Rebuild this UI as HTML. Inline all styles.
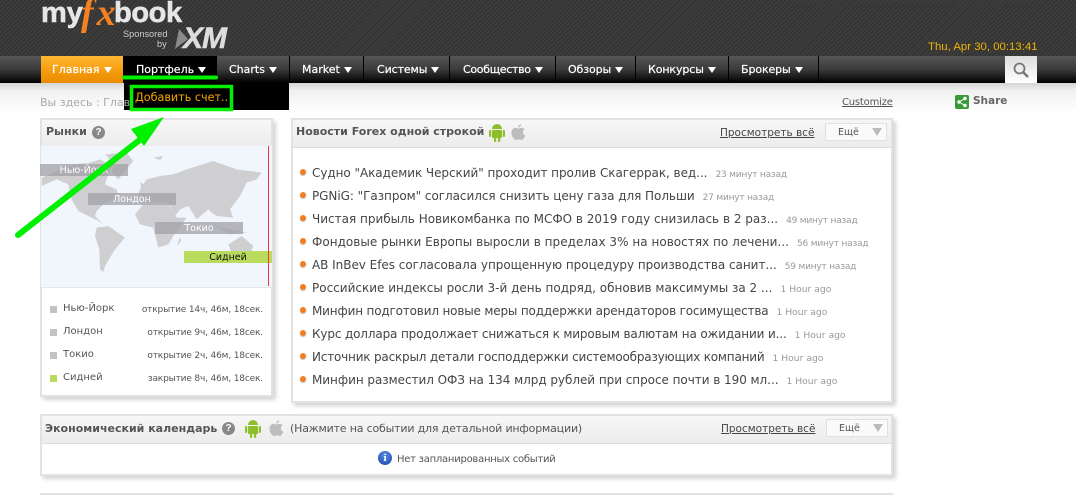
<!DOCTYPE html>
<html><head><meta charset="utf-8"><style>
html,body{margin:0;padding:0;background:#fff;width:1076px;height:495px;overflow:hidden}
body{position:relative;font-family:"DejaVu Sans","Liberation Sans",sans-serif;font-size:12px;color:#4a4a4a}
.a{position:absolute;white-space:nowrap}
.hd{position:absolute;left:0;top:0;width:1076px;height:56px;background:repeating-linear-gradient(135deg,#2f2f2f 0 1px,#3d3d3d 1px 3px)}
.nav{position:absolute;left:0;top:56px;width:1076px;height:27px;background:linear-gradient(#555,#3a3a3a 50%,#000)}
.sep{position:absolute;top:56px;width:1px;height:27px;background:#000}
.ni{position:absolute;top:62px;font:11px/16px "DejaVu Sans",sans-serif;color:#fff;white-space:nowrap;-webkit-text-stroke:.2px #fff}
.tri{display:inline-block;width:0;height:0;border-left:4px solid transparent;border-right:4px solid transparent;border-top:6px solid #fff;margin-left:4px}
.panel{position:absolute;background:#fff;border:2px solid #e2e2e2;box-sizing:border-box;box-shadow:3px 3px 4px #d4d4d4}
.ph{position:absolute;left:0;top:0;right:0;height:27px;background:linear-gradient(#f7f7f7,#ececec);border-bottom:1px solid #dedede}
.n{position:absolute;left:312px;font-size:12px;color:#454545;white-space:nowrap;line-height:16px}
.n small{font-size:9px;color:#999;margin-left:8px;letter-spacing:-.2px}
.n small.h{font-size:9.2px;letter-spacing:0}
.dot{position:absolute;left:300px;width:6px;height:6px;border-radius:50%;background:#f57d20;box-shadow:0 1px 1px #bbb}
.bar{position:absolute;height:12px;width:88px;color:#fff;font-size:9.5px;line-height:14px;text-align:center;background:rgba(160,160,165,.75)}
.sq{position:absolute;left:50px;width:7px;height:7px;background:#c3c3c3}
.mk{position:absolute;left:63px;font-size:10px;color:#555;line-height:14px}
.tm{position:absolute;right:813px;font-size:9px;color:#555;line-height:14px;white-space:nowrap;letter-spacing:-.16px}
.t{font-weight:bold;color:#555;font-size:11px;white-space:nowrap}
.lnk{position:absolute;font-size:10.5px;color:#444;text-decoration:underline;white-space:nowrap}
.btn{position:absolute;width:60px;height:16px;background:#fafafa;border:1px solid #e0e0e0;font-size:9.5px;line-height:17px;color:#555;text-indent:12px}
.btn i{position:absolute;right:4px;top:4px;width:0;height:0;border-left:5px solid transparent;border-right:5px solid transparent;border-top:8px solid #bbb}
</style></head><body>
<div class="hd"></div>
<div class="a" style="left:788px;top:0;width:250px;height:3px;background:#3a3a3a"></div>

<div class="a" style="left:41px;top:-3px;font:bold 29px 'Liberation Sans',sans-serif;color:#e6e6e6;-webkit-text-stroke:.6px #e6e6e6">my</div>
<div class="a" style="left:81px;top:-9px;font:italic bold 38px 'Liberation Serif',serif;color:#f58220;letter-spacing:3px">fx</div>
<div class="a" style="left:114px;top:-3px;font:bold 29px 'Liberation Sans',sans-serif;color:#e6e6e6;-webkit-text-stroke:.6px #e6e6e6;letter-spacing:-.4px">book</div>
<div class="a" style="left:123px;top:29px;font:9.2px/10px 'Liberation Sans',sans-serif;color:#ccc">Sponsored</div>
<div class="a" style="left:157px;top:39px;font:9.2px/10px 'Liberation Sans',sans-serif;color:#ccc">by</div>
<svg class="a" style="left:174px;top:27px" width="56" height="24"><polygon points="1,22 5,2 14,12" fill="#8a8a8a"/></svg>
<div class="a" style="left:183px;top:22px;font:italic bold 30px 'Liberation Sans',sans-serif;color:#ddd;letter-spacing:-1px;-webkit-text-stroke:.6px #ddd">XM</div>

<div class="a" style="left:928px;top:40px;line-height:14px;color:#f0b400;font-family:'Liberation Sans',sans-serif;font-size:11.4px">Thu, Apr 30, 00:13:41</div>

<div class="nav"></div>
<div class="a" style="left:0;top:83px;width:1076px;height:30px;background:linear-gradient(#d4d4d4,#f0f0f0 25%,#fff)"></div>
<div class="a" style="left:41px;top:56px;width:82px;height:27px;background:linear-gradient(#ffb733,#f59a0c 60%,#e98b00)"></div>
<div class="a" style="left:123px;top:56px;width:94px;height:27px;background:#000"></div>
<div class="a" style="left:124px;top:82px;width:165px;height:28px;background:#000"></div>
<div class="sep" style="left:289px"></div><div class="sep" style="left:363px"></div><div class="sep" style="left:449px"></div><div class="sep" style="left:555px"></div><div class="sep" style="left:635px"></div><div class="sep" style="left:728px"></div><div class="sep" style="left:818px"></div>
<div class="ni" style="left:52px">Главная<span class="tri"></span></div>
<div class="ni" style="left:136px">Портфель<span class="tri"></span></div>
<div class="ni" style="left:229px">Charts<span class="tri"></span></div>
<div class="ni" style="left:302px">Market<span class="tri"></span></div>
<div class="ni" style="left:377px;letter-spacing:-.1px">Системы<span class="tri"></span></div>
<div class="ni" style="left:463px;letter-spacing:-.3px">Сообщество<span class="tri"></span></div>
<div class="ni" style="left:568px;letter-spacing:-.1px">Обзоры<span class="tri"></span></div>
<div class="ni" style="left:648px;letter-spacing:-.1px">Конкурсы<span class="tri"></span></div>
<div class="ni" style="left:741px;letter-spacing:-.1px">Брокеры<span class="tri"></span></div>
<div class="a" style="left:1005px;top:56px;width:32px;height:27px;background:linear-gradient(#ddd,#fff)"></div>
<svg class="a" style="left:1013px;top:62px" width="18" height="18" fill="none" stroke="#777"><circle cx="6.500" cy="6.500" r="5" stroke-width="1.800"/><path d="M10 10L15 15" stroke-width="2.500"/></svg>

<div class="a" style="left:135px;top:90px;font-size:11.200px;line-height:16px;color:#f5a800">Добавить счет..</div>

<div class="a" style="left:40px;top:96px;font-size:11px;line-height:14px;color:#aaa">Вы здесь : Глав</div>
<div class="a" style="left:842px;top:96px;font-size:10px;line-height:14px;color:#555;text-decoration:underline;letter-spacing:-.2px">Customize</div>
<div class="a" style="left:955px;top:95px;width:14px;height:14px;background:#3a9a3a;border-radius:2px"></div>
<svg class="a" style="left:955px;top:95px" width="14" height="14" fill="#fff" stroke="#fff"><path d="M10 3.500L4 7l6 3.500" fill="none"/><circle cx="10" cy="3.500" r="1.200"/><circle cx="4" cy="7" r="1.200"/><circle cx="10" cy="10.500" r="1.200"/></svg>
<div class="a t" style="left:973px;top:94px;line-height:14px;color:#666;font-size:10.5px">Share</div>

<!-- markets -->
<div class="panel" style="left:40px;top:118px;width:233px;height:279px"><div class="ph" style="height:27px"></div></div>
<div class="a t" style="left:46px;top:125px;line-height:14px">Рынки</div>
<div class="a" style="left:92px;top:126px;width:13px;height:13px;border-radius:50%;background:#888;color:#fff;font:bold 10px/13px 'Liberation Sans',sans-serif;text-align:center">?</div>
<div class="a" style="left:41px;top:146px;width:231px;height:141px;background:#f1f6fd"></div>
<svg class="a" style="left:40px;top:146px" width="235" height="142" viewBox="0 0 705 426" fill="#cfcfd2">
<polygon points="5,95 40,80 100,55 150,50 180,40 215,60 205,85 195,115 230,130 235,150 210,165 190,175 170,195 165,210 190,235 175,225 145,210 115,195 95,160 85,115 50,100 5,120"/>
<polygon points="195,25 260,20 280,45 260,70 235,100 215,80 220,50"/>
<polygon points="170,245 205,240 255,275 225,310 195,360 190,378 180,370 178,310 165,270"/>
<polygon points="285,205 310,175 385,175 410,215 440,215 400,270 385,295 355,305 340,245 300,235"/>
<polygon points="300,130 320,100 360,90 400,85 440,70 520,45 590,70 665,80 650,100 620,110 600,150 570,190 580,215 530,210 515,200 505,190 470,220 445,180 420,190 405,210 385,170 320,170 295,145"/>
<polygon points="565,295 605,270 640,300 625,335 575,320"/>
<polygon points="585,130 597,155 575,170"/><polygon points="525,240 620,260 570,265"/><polygon points="300,110 315,115 305,135"/><polygon points="420,275 424,285 410,300"/><polygon points="340,35 370,30 360,42"/>
</svg>
<div class="bar" style="left:40px;top:164px">Нью-Йорк</div>
<div class="bar" style="left:88px;top:193px">Лондон</div>
<div class="bar" style="left:155px;top:222px">Токио</div>
<div class="bar" style="left:184px;top:251px;background:#b9dc5e;color:#111">Сидней</div>
<div class="a" style="left:268px;top:146px;width:1px;height:140px;background:#f33"></div>
<div class="a" style="left:41px;top:287px;width:231px;height:1px;background:#e6e6e6"></div>
<div class="sq" style="top:306px"></div><div class="mk" style="top:302px">Нью-Йорк</div><div class="tm" style="top:303px">открытие 14ч, 46м, 18сек.</div>
<div class="sq" style="top:329px"></div><div class="mk" style="top:325px">Лондон</div><div class="tm" style="top:326px">открытие 9ч, 46м, 18сек.</div>
<div class="sq" style="top:352px"></div><div class="mk" style="top:348px">Токио</div><div class="tm" style="top:349px">открытие 2ч, 46м, 18сек.</div>
<div class="sq" style="top:375px;background:#b9dc5e"></div><div class="mk" style="top:371px">Сидней</div><div class="tm" style="top:372px">закрытие 8ч, 46м, 18сек.</div>

<!-- news -->
<div class="panel" style="left:291px;top:118px;width:602px;height:285px"><div class="ph"></div></div>
<div class="a t" style="left:296px;top:125px;line-height:14px">Новости Forex одной строкой</div>
<svg class="a" style="left:488px;top:123px" width="18" height="19" fill="#8cbf2a"><path d="M4 6a5 5 0 0 1 10 0z"/><rect x="4" y="7" width="10" height="8" rx="1"/><rect x="1" y="7" width="2.200" height="7" rx="1.100"/><rect x="14.800" y="7" width="2.200" height="7" rx="1.100"/><rect x="6" y="14" width="2.200" height="5" rx="1"/><rect x="10" y="14" width="2.200" height="5" rx="1"/></svg>
<svg class="a" style="left:511px;top:124px" width="15" height="17" fill="#bdbdbd"><path d="M10 0c0 2-1.500 3.500-3 3.500C7 2 8.500.5 10 0zM7.500 4.500c1 0 1.800-.7 3-.7 1.200 0 2.300.7 3 1.700-2.500 1.500-2 5 .8 6-.7 2-2.200 4.500-3.600 4.500-1 0-1.500-.6-2.800-.6-1.300 0-1.800.6-2.800.6C3 16 .5 12 .5 8.800.5 5.700 2.500 3.800 4.500 3.800c1.200 0 2.200.7 3 .7z"/></svg>
<div class="lnk" style="left:720px;top:126px;line-height:14px">Просмотреть всё</div>
<div class="btn" style="left:825px;top:123px">Ещё<i></i></div>

<div class="dot" style="top:169px"></div><div class="n" style="top:165px"><span style="letter-spacing:-.05px">Судно "Академик Черский" проходит пролив Скагеррак, вед...</span><small>23 минут назад</small></div>
<div class="dot" style="top:192px"></div><div class="n" style="top:188px"><span style="letter-spacing:-.05px">PGNiG: "Газпром" согласился снизить цену газа для Польши</span><small>27 минут назад</small></div>
<div class="dot" style="top:215px"></div><div class="n" style="top:211px">Чистая прибыль Новикомбанка по МСФО в 2019 году снизилась в 2 раз...<small>49 минут назад</small></div>
<div class="dot" style="top:238px"></div><div class="n" style="top:234px"><span style="letter-spacing:.03px">Фондовые рынки Европы выросли в пределах 3% на новостях по лечени...</span><small>56 минут назад</small></div>
<div class="dot" style="top:261px"></div><div class="n" style="top:257px"><span style="letter-spacing:-.03px">AB InBev Efes согласовала упрощенную процедуру производства санит...</span><small>59 минут назад</small></div>
<div class="dot" style="top:284px"></div><div class="n" style="top:280px">Российские индексы росли 3-й день подряд, обновив максимумы за 2 ...<small class="h">1 Hour ago</small></div>
<div class="dot" style="top:307px"></div><div class="n" style="top:303px"><span style="letter-spacing:-.17px">Минфин подготовил новые меры поддержки арендаторов госимущества</span><small class="h">1 Hour ago</small></div>
<div class="dot" style="top:330px"></div><div class="n" style="top:326px"><span style="letter-spacing:-.14px">Курс доллара продолжает снижаться к мировым валютам на ожидании и...</span><small class="h">1 Hour ago</small></div>
<div class="dot" style="top:353px"></div><div class="n" style="top:349px"><span style="letter-spacing:-.19px">Источник раскрыл детали господдержки системообразующих компаний</span><small class="h">1 Hour ago</small></div>
<div class="dot" style="top:376px"></div><div class="n" style="top:372px"><span style="letter-spacing:-.045px">Минфин разместил ОФЗ на 134 млрд рублей при спросе почти в 190 мл...</span><small class="h">1 Hour ago</small></div>

<!-- calendar -->
<div class="panel" style="left:40px;top:414px;width:853px;height:62px"><div class="ph"></div></div>
<div class="a t" style="left:45px;top:422px;line-height:14px">Экономический календарь</div>
<div class="a" style="left:222px;top:422px;width:13px;height:13px;border-radius:50%;background:#888;color:#fff;font:bold 10px/13px 'Liberation Sans',sans-serif;text-align:center">?</div>
<svg class="a" style="left:244px;top:419px" width="18" height="19" fill="#8cbf2a"><path d="M4 6a5 5 0 0 1 10 0z"/><rect x="4" y="7" width="10" height="8" rx="1"/><rect x="1" y="7" width="2.200" height="7" rx="1.100"/><rect x="14.800" y="7" width="2.200" height="7" rx="1.100"/><rect x="6" y="14" width="2.200" height="5" rx="1"/><rect x="10" y="14" width="2.200" height="5" rx="1"/></svg>
<svg class="a" style="left:269px;top:420px" width="15" height="17" fill="#bdbdbd"><path d="M10 0c0 2-1.500 3.500-3 3.500C7 2 8.500.5 10 0zM7.500 4.500c1 0 1.800-.7 3-.7 1.200 0 2.300.7 3 1.700-2.500 1.500-2 5 .8 6-.7 2-2.200 4.500-3.600 4.500-1 0-1.500-.6-2.800-.6-1.300 0-1.800.6-2.800.6C3 16 .5 12 .5 8.800.5 5.700 2.500 3.800 4.500 3.800c1.200 0 2.200.7 3 .7z"/></svg>
<div class="a" style="left:290px;top:422px;font-size:11px;line-height:14px;color:#555;letter-spacing:-.18px">(Нажмите на событии для детальной информации)</div>
<div class="lnk" style="left:721px;top:422px;line-height:14px">Просмотреть всё</div>
<div class="btn" style="left:826px;top:419px">Ещё<i></i></div>
<div class="a" style="left:378px;top:451px;width:14px;height:14px;border-radius:50%;background:radial-gradient(circle at 50% 30%,#5a8be0,#1a45b0);color:#fff;font:bold 11px/14px 'Liberation Serif',serif;text-align:center">i</div>
<div class="a" style="left:397px;top:453px;font-size:10px;line-height:14px;color:#555;letter-spacing:-.25px">Нет запланированных событий</div>

<div class="a" style="left:40px;top:493px;width:853px;height:2px;background:#e2e2e2"></div>

<!-- annotations -->
<svg class="a" style="left:0;top:0" width="300" height="260">
<path d="M18 235L146 135" stroke="#00f000" stroke-width="6" stroke-linecap="round" fill="none"/>
<polygon points="164,117 131,129 144,146" fill="#00f000"/>
<path d="M124 77.500H216" stroke="#00f000" stroke-width="4" stroke-linecap="round"/>
<rect x="131.500" y="86.500" width="100" height="23" fill="none" stroke="#00f000" stroke-width="3.500"/>
</svg>
</body></html>
